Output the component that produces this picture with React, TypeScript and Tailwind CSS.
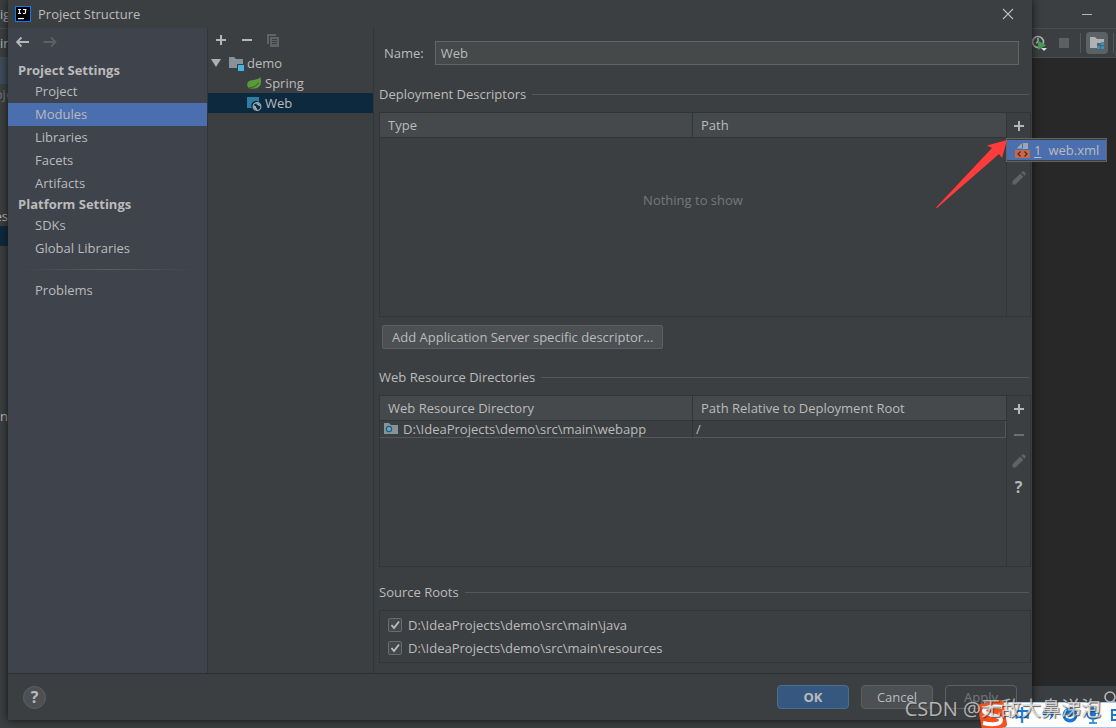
import type { ReactNode } from "react";

const settings = [
  { title: "Project Settings", items: ["Project", "Modules", "Libraries", "Facets", "Artifacts"] },
  { title: "Platform Settings", items: ["SDKs", "Global Libraries"] },
];

function Plus() {
  return (
    <svg width="12" height="12" viewBox="0 0 12 12" shapeRendering="crispEdges" aria-hidden="true">
      <path d="M5 1h2v4h4v2H7v4H5V7H1V5h4z" fill="currentColor" />
    </svg>
  );
}

function Minus() {
  return (
    <svg width="12" height="12" viewBox="0 0 12 12" shapeRendering="crispEdges" aria-hidden="true">
      <path d="M1 5h10v2H1z" fill="currentColor" />
    </svg>
  );
}

function Pencil() {
  return (
    <svg width="14" height="14" viewBox="0 0 14 14" aria-hidden="true">
      <path d="M.5 10.2 8.2 2.5l3.2 3.2-7.700 7.700H.5zM9.200 1.600l1-1a1.300 1.300 0 0 1 1.800 0l1.400 1.400a1.300 1.300 0 0 1 0 1.800l-1 1z" fill="#606263" />
    </svg>
  );
}

function Copy() {
  return (
    <svg width="14" height="14" viewBox="0 0 14 14" shapeRendering="crispEdges" aria-hidden="true">
      <path d="M1 1h9v2H3v8H1zM4 4h9v10H4zM6 6v1h5V6zM6 8v1h5V8zM6 10v1h5v-1z" fill="#606263" fillRule="evenodd" />
    </svg>
  );
}

function Arrow({ back }: { back?: boolean }) {
  return (
    <svg width="14" height="12" viewBox="0 0 14 12" fill="none" stroke="currentColor" strokeWidth="1.800" aria-hidden="true">
      {back ? <path d="M13 6H1.500M5.500 1.500 1 6 5.500 10.500" /> : <path d="M.5 6H12M8 1.500 12.500 6 8 10.500" />}
    </svg>
  );
}

function ModuleIcon() {
  return (
    <svg width="16" height="16" viewBox="0 0 16 16" aria-hidden="true">
      <path d="M1 2h5l2 2h7v5H9v4H1z" fill="#87939a" />
      <path d="M10 10h6v6h-6z" fill="#40b6e0" />
    </svg>
  );
}

function SpringIcon() {
  return (
    <svg width="16" height="16" viewBox="0 0 16 16" aria-hidden="true">
      <path d="M14.300 2c1.300 4.500.9 8-1.600 10-2.700 2.100-7.200 1.900-10 1.200C.2 10.500.8 6.500 4.500 5.500 8 4.600 12 5 14.300 2z" fill="#5a9a3a" />
      <path d="M2.500 13c4.500-.3 8.500-2.200 10.200-5.500" fill="none" stroke="#335b28" strokeWidth="1" />
    </svg>
  );
}

function WebIcon() {
  return (
    <svg width="16" height="16" viewBox="0 0 16 16" aria-hidden="true">
      <path d="M1 2h12v5.200A4.600 4.600 0 0 0 6 13H1z" fill="#2c7fa3" />
      <circle cx="11" cy="11.500" r="3.900" fill="#0d293e" stroke="#a3b0b8" strokeWidth="1.100" />
      <path d="M7.500 10.200l2.300 1 .4 1.600 1 .9-.4 1.600-1.800-.7-1.300-2zM10.500 8l2.500.4 1.500 2.200-1.700.6-.6-1.200-1.700-.6z" fill="#a3b0b8" />
    </svg>
  );
}

function FolderDot() {
  return (
    <svg width="16" height="16" viewBox="0 0 16 16" aria-hidden="true">
      <path d="M1 2h5l2 2h7v9H1z" fill="#87939a" />
      <circle cx="6" cy="8" r="3.200" fill="#3c5563" />
      <circle cx="6" cy="8" r="2" fill="#40b6e0" />
    </svg>
  );
}

function IconButton({ label, className = "", children }: { label: string; className?: string; children: ReactNode }) {
  return (
    <button type="button" aria-label={label} className={`flex size-[26px] items-center justify-center text-[#b4b6b8] ${className}`}>
      {children}
    </button>
  );
}

function Section({ title, children }: { title: string; children: ReactNode }) {
  return (
    <section className="flex flex-col">
      <div className="flex h-5 items-center gap-1.5 pr-0.5">
        <h2>{title}</h2>
        <span className="h-px flex-1 bg-[#55585a]" />
      </div>
      {children}
    </section>
  );
}

function DataPanel({ columns, rows = [], children, tools, body }: { columns: [string, string]; rows?: [string, string][]; children?: ReactNode; tools: ReactNode; body: string }) {
  return (
    <div className={`flex border border-[#323537] ${body}`}>
      <div className="flex flex-1 flex-col">
        <table className="w-full table-fixed border-separate border-spacing-0">
          <thead>
            <tr className="h-[25px] bg-[#45494b] text-left">
              <th className="border-r border-b border-[#323537] px-2 py-0 font-normal">{columns[0]}</th>
              <th className="border-b border-[#323537] px-2 py-0 font-normal">{columns[1]}</th>
            </tr>
          </thead>
          <tbody>
            {rows.map(([dir, path]) => (
              <tr key={dir} className="h-[17px] leading-4">
                <td className="border-r border-b border-r-[#323537] border-b-[#55585a] px-[3px] py-0">
                  <span className="flex h-4 items-center gap-1">
                    <FolderDot />
                    {dir}
                  </span>
                </td>
                <td className="border-r border-b border-[#55585a] px-[3px] py-0">{path}</td>
              </tr>
            ))}
          </tbody>
        </table>
        {children}
      </div>
      <div className="flex w-6 flex-col items-center border-l border-[#323537]">{tools}</div>
    </div>
  );
}

function Backdrop() {
  return (
    <div className="flex h-full flex-col bg-[#282828]">
      <div className="flex h-7 items-center justify-between bg-[#3c3f41]">
        <span>ig</span>
        <span className="mr-6 h-px w-2.5 bg-[#b4b6b8]" />
      </div>
      <div className="flex h-[30px] items-center justify-between border-y border-[#4b4e50] bg-[#3c3f41]">
        <span>in</span>
        <div className="flex items-center">
          <svg width="18" height="18" viewBox="0 0 18 18" className="mr-2.5" aria-hidden="true">
            <circle cx="7" cy="8" r="5.500" fill="none" stroke="#afb1b3" strokeWidth="1.600" />
            <path d="M7 4v4l-2 1" fill="none" stroke="#afb1b3" strokeWidth="1.500" />
            <path d="M7 6.500l8 4.700L7 16z" fill="#499c54" />
            <path d="M10 14h6l-3 3z" fill="#dddddd" />
          </svg>
          <span className="mr-[11px] size-2.5 bg-[#5e6061]" />
          <span className="mr-[5px] h-5 w-px bg-[#55585a]" />
          <span className="mr-[5px] flex size-[22px] items-center justify-center rounded-sm bg-[#5c6164]">
            <svg width="16" height="16" viewBox="0 0 16 16" aria-hidden="true">
              <path d="M1 2h5l2 2h7v4H8v5H1z" fill="#afb1b3" />
              <path d="M12 7h3v3h-3zM8 11h3v3H8zM12 11h3v3h-3z" fill="#3592c4" />
            </svg>
          </span>
          <span className="mr-0.5 h-5 w-px bg-[#55585a]" />
        </div>
      </div>
      <div className="flex w-2 flex-1 flex-col bg-[#3c3f41]">
        <div className="h-[26px] bg-[#3f4b5b]" />
        <div className="flex h-[122px] justify-center text-[#77797b]">oje</div>
        <div className="flex h-5 justify-end">es</div>
        <div className="h-5 bg-[#0d293e]" />
        <div className="pt-[160px]">ns</div>
      </div>
      <div className="flex h-[42px] justify-end bg-[#3c3f41] pt-1">
        <svg width="14" height="18" viewBox="0 0 14 18" fill="none" stroke="#b4b6b8" strokeWidth="1.600" aria-hidden="true">
          <circle cx="8" cy="7" r="5" />
          <path d="M11.500 11l4 4" />
        </svg>
      </div>
    </div>
  );
}

function InputBar() {
  return (
    <div className="absolute right-0 bottom-0 flex h-[26px] w-[132px] items-center border-y border-[#a8c8ec] bg-white pl-[30px] text-base font-bold text-[#1478dc]">
      <svg width="34" height="34" viewBox="0 0 34 34" className="absolute -top-1 -left-2" aria-hidden="true">
        <path d="M4 5 25 1q2 0 2.500 2L31 25q0 3-3 3.500L9 31q-3 0-3.500-3L2 9Q1.500 6 4 5z" fill="#f4511e" />
        <path d="M26 8C17 7 8 8 8 12s17 4 17 9-10 5-18 3" fill="none" stroke="#fff" strokeWidth="4" />
      </svg>
      <span className="w-7">中</span>
      <svg width="74" height="20" viewBox="0 0 74 20" fill="currentColor" aria-hidden="true">
        <circle cx="3" cy="8" r="2.500" />
        <path d="M8 7h4q0 6-5 8 3-4 1-8z" />
        <circle cx="28" cy="10" r="7.500" />
        <path d="M23 10q5 6 10 0" fill="none" stroke="#fff" strokeWidth="2" />
        <rect x="48" y="2" width="6" height="10" rx="3" />
        <path d="M45 8q0 6 6 6t6-6M51 14v4M47 18h8" fill="none" stroke="currentColor" strokeWidth="1.500" />
        <path d="M69 4h12v12H69zM71 6v3h3V6zM76 6v3h3V6zM71 11v3h8v-3z" fillRule="evenodd" />
      </svg>
    </div>
  );
}

export default function App() {
  return (
    <main className="relative h-screen min-h-[720px] overflow-hidden font-['Open_Sans','Noto_Sans_CJK_SC',sans-serif] text-[13px] leading-5 text-[#bbbbbb]">
      <Backdrop />
      <div role="dialog" aria-label="Project Structure" className="absolute top-0 right-[84px] bottom-2 left-2 flex flex-col bg-[#3c3f41] shadow-[0_0_8px_#111111]">
        <header className="flex h-7 items-center gap-[7px] pr-[18px] pl-[7px]">
          <svg width="16" height="16" viewBox="0 0 16 16" aria-hidden="true">
            <rect x=".5" y=".5" width="15" height="15" fill="#000" stroke="#087cfa" />
            <path d="M3 3.500h3M4.500 3v4.500M3 7.500h3M8 3.500h3.500M10.500 3v3.500q0 1-1 1H8" stroke="#fff" fill="none" strokeWidth="1.200" />
            <path d="M3 12h6v1.200H3z" fill="#fff" />
          </svg>
          <h1 className="flex-1">Project Structure</h1>
          <button type="button" aria-label="Close">
            <svg width="12" height="12" viewBox="0 0 12 12" stroke="#bbbbbb" strokeWidth="1.100" aria-hidden="true">
              <path d="M1 1l10 10M11 1 1 11" />
            </svg>
          </button>
        </header>

        <div className="flex min-h-0 flex-1 border-b border-[#2d2f31]">
          <nav className="flex w-[200px] shrink-0 flex-col border-r border-[#323537] bg-[#3f434c]">
            <div className="flex h-[33px] gap-[13px] pt-2 pl-2">
              <button type="button" aria-label="Back" className="h-3 text-[#b4b6b8]"><Arrow back /></button>
              <button type="button" aria-label="Forward" className="h-3 text-[#5e6061]"><Arrow /></button>
            </div>
            {settings.map((group) => (
              <div key={group.title}>
                <h2 className="h-[19px] pl-2.5 leading-[18px] font-bold">{group.title}</h2>
                {group.items.map((item) => (
                  <a key={item} href="#" className={`block h-[23px] pl-[27px] leading-[23px] ${item === "Modules" ? "bg-[#4b6eaf]" : ""}`}>
                    {item}
                  </a>
                ))}
              </div>
            ))}
            <hr className="mx-3 my-[9px] h-px border-0 bg-linear-to-r from-transparent via-[#5b5d60] to-transparent" />
            <a href="#" className="block h-[23px] pl-[27px] leading-[23px]">Problems</a>
          </nav>

          <aside className="flex w-[166px] shrink-0 flex-col border-r border-[#323537]">
            <div className="flex h-6 items-center">
              <IconButton label="Add module"><Plus /></IconButton>
              <IconButton label="Remove module"><Minus /></IconButton>
              <IconButton label="Copy module"><Copy /></IconButton>
            </div>
            <ul>
              <li className="flex h-[21px] items-center gap-[3px] pl-[3px]">
                <svg width="10" height="8" viewBox="0 0 10 8" className="mr-1" aria-hidden="true"><path d="M0 0h10L5 8z" fill="#adadad" /></svg>
                <ModuleIcon />
                demo
              </li>
              <li className="flex h-5 items-center gap-[3px] pl-[38px]"><SpringIcon />Spring</li>
              <li className="flex h-5 items-center gap-[3px] bg-[#0d293e] pl-[38px]"><WebIcon />Web</li>
            </ul>
          </aside>

          <div className="flex min-w-0 flex-1 flex-col pr-px pl-[5px]">
            <label className="flex items-center gap-[11px] pt-[13px] pr-3 pl-[5px]">
              Name:
              <input defaultValue="Web" className="h-6 min-w-0 flex-1 border border-[#646464] bg-[#45494a] px-[5px] outline-none" />
            </label>

            <div className="mt-[19px]">
              <Section title="Deployment Descriptors">
                <DataPanel
                  columns={["Type", "Path"]}
                  body="mt-2 h-[205px]"
                  tools={
                    <>
                      <IconButton label="Add descriptor"><Plus /></IconButton>
                      <IconButton label="Remove descriptor"><Minus /></IconButton>
                      <IconButton label="Edit descriptor"><Pencil /></IconButton>
                    </>
                  }
                >
                  <p className="pt-[52px] text-center text-[#777777]">Nothing to show</p>
                </DataPanel>
                <button type="button" className="mt-2 ml-[3px] h-6 self-start rounded-xs border border-[#5e6060] bg-[#4c5052] px-[9px]">
                  Add Application Server specific descriptor...
                </button>
              </Section>
            </div>

            <div className="mt-[18px]">
              <Section title="Web Resource Directories">
                <DataPanel
                  columns={["Web Resource Directory", "Path Relative to Deployment Root"]}
                  rows={[["D:\\IdeaProjects\\demo\\src\\main\\webapp", "/"]]}
                  body="mt-2 h-[172px]"
                  tools={
                    <>
                      <IconButton label="Add directory"><Plus /></IconButton>
                      <IconButton label="Remove directory" className="opacity-40"><Minus /></IconButton>
                      <IconButton label="Edit directory"><Pencil /></IconButton>
                      <IconButton label="Help" className="text-base font-bold">?</IconButton>
                    </>
                  }
                />
              </Section>
            </div>

            <div className="mt-[15px]">
              <Section title="Source Roots">
                <div className="mt-2 flex flex-col border border-[#323537] pt-0.5 pb-[3px] pl-2">
                  {["java", "resources"].map((dir) => (
                    <label key={dir} className="flex h-[23px] items-center gap-1.5">
                      <span className="grid size-3.5">
                        <input type="checkbox" defaultChecked className="peer col-start-1 row-start-1 size-3.5 appearance-none rounded-xs border border-[#6b6b6b] bg-[#43494a]" />
                        <svg viewBox="0 0 14 14" className="pointer-events-none invisible col-start-1 row-start-1 size-3.5 peer-checked:visible" fill="none" stroke="#bbbbbb" strokeWidth="1.900" aria-hidden="true">
                          <path d="M3.500 7 6 10l5-6.500" />
                        </svg>
                      </span>
                      {`D:\\IdeaProjects\\demo\\src\\main\\${dir}`}
                    </label>
                  ))}
                </div>
              </Section>
            </div>
          </div>
        </div>

        <footer className="flex h-[46px] items-center gap-3 px-[15px]">
          <button type="button" aria-label="Help" className="mr-auto size-[23px] rounded-full border border-[#5e6060] bg-[#4c5052] text-base leading-5 font-bold">?</button>
          <button type="button" className="h-6 w-[72px] rounded-sm border border-[#4c708c] bg-[#365880] font-bold">OK</button>
          <button type="button" className="h-6 w-[72px] rounded-sm border border-[#5e6060] bg-[#4c5052]">Cancel</button>
          <button type="button" disabled className="h-6 w-[72px] rounded-sm border border-[#5e6060] text-[#777777]">Apply</button>
        </footer>
      </div>

      <div role="menu" className="absolute top-[138px] right-[9px] w-[101px] border border-[#616365] bg-[#3c3f41] py-px">
        <button type="button" role="menuitem" className="flex h-5 w-full items-center bg-[#4b6eaf] pl-2">
          <svg width="16" height="16" viewBox="0 0 16 16" aria-hidden="true">
            <path d="M7 1v5H2zM8 1h5v6H2v-.5h6z" fill="#9aa7b0" />
            <path d="M0 8h15v8H0z" fill="#c4694d" />
            <path d="M5.500 9.500 3 12l2.500 2.500M9.500 9.500 12 12l-2.500 2.500" stroke="#4d2a20" strokeWidth="1.200" fill="none" />
          </svg>
          <span className="ml-[3px] underline underline-offset-2">1</span>
          <span className="ml-[7px]">web.xml</span>
        </button>
      </div>
      <svg width="74" height="72" viewBox="0 0 74 72" className="pointer-events-none absolute top-[138px] right-[108px]" aria-hidden="true">
        <path d="M2 69.500 58 10l-5-2.500L73 2 68 20l-3-4L3 70z" fill="#ff3b3b" />
      </svg>
      <InputBar />
      <p className="pointer-events-none absolute right-[15px] bottom-[5px] text-xl leading-7 whitespace-nowrap text-[#d0d0d0] opacity-80 [text-shadow:1px_1px_1px_#333333]">CSDN @无敌大鼻涕泡</p>
    </main>
  );
}
